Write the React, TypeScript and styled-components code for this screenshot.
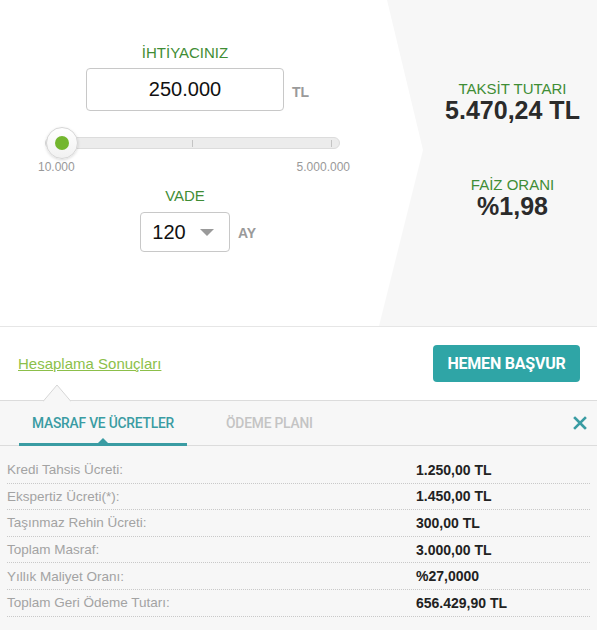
import React from 'react'
import styled, { createGlobalStyle } from 'styled-components'

const GlobalStyle = createGlobalStyle`
  html, body {
    margin: 0;
    padding: 0;
    background: #fff;
    font-family: "Liberation Sans", Arial, sans-serif;
  }
`

const green = '#3f8d35'
const teal = '#2fa5a6'

const Wrapper = styled.div`
  width: 597px;
  height: 630px;
  overflow: hidden;
  display: flex;
  flex-direction: column;
`

const Calculator = styled.div`
  height: 326px;
  display: flex;
  border-bottom: 1px solid #e6e6e6;
`

const Inputs = styled.div`
  width: 370px;
  padding-top: 44px;
  display: flex;
  flex-direction: column;
  align-items: center;
`

const FieldLabel = styled.div<{ $top?: number }>`
  font-size: 15px;
  line-height: 18px;
  color: ${green};
  margin-top: ${({ $top }) => $top || 0}px;
`

const FieldRow = styled.div<{ $top: number }>`
  width: 100%;
  display: grid;
  grid-template-columns: 1fr auto 1fr;
  align-items: center;
  margin-top: ${({ $top }) => $top}px;
`

const AmountBox = styled.div`
  width: 196px;
  height: 41px;
  border: 1px solid #c8c8c8;
  border-radius: 4px;
  display: flex;
  align-items: center;
  justify-content: center;
  font-size: 20px;
  color: #111;
`

const SelectBox = styled.div`
  width: 90px;
  height: 40px;
  border: 1px solid #c8c8c8;
  border-radius: 4px;
  display: flex;
  align-items: center;
  justify-content: center;
  gap: 14px;
  padding-right: 4px;
  box-sizing: border-box;
  font-size: 20px;
  color: #111;
`

const Caret = styled.span`
  width: 0;
  height: 0;
  border-left: 7px solid transparent;
  border-right: 7px solid transparent;
  border-top: 7px solid #9a9a9a;
`

const Unit = styled.span<{ $offset: number }>`
  font-size: 14px;
  font-weight: bold;
  color: #9a9a9a;
  margin-left: 8px;
  padding-top: ${({ $offset }) => $offset}px;
  justify-self: start;
`

const SliderBlock = styled.div`
  align-self: flex-start;
  margin-left: 38px;
  margin-top: 16px;
  width: 312px;
`

const SliderTrackArea = styled.div`
  height: 32px;
  display: flex;
  align-items: center;
  padding-left: 7px;
`

const Track = styled.div`
  position: relative;
  width: 295px;
  height: 12px;
  box-sizing: border-box;
  background: #ececec;
  border: 1px solid #dcdcdc;
  border-radius: 6px;
`

const Tick = styled.span<{ $left: number }>`
  position: absolute;
  top: 2px;
  left: ${({ $left }) => $left}px;
  width: 1px;
  height: 7px;
  background: #c4c4c4;
`

const Knob = styled.div`
  position: absolute;
  left: 0;
  top: -11px;
  width: 32px;
  height: 32px;
  box-sizing: border-box;
  border-radius: 50%;
  background: linear-gradient(#fff, #f1f1f1);
  border: 1px solid #d6d6d6;
  box-shadow: 0 1px 3px rgba(0, 0, 0, 0.15);
  display: flex;
  align-items: center;
  justify-content: center;
`

const KnobDot = styled.span`
  width: 14px;
  height: 14px;
  border-radius: 50%;
  background: #73b62e;
`

const Scale = styled.div`
  display: flex;
  justify-content: space-between;
  font-size: 12px;
  line-height: 14px;
  color: #999;
  margin-top: 1px;
`

const Result = styled.div`
  flex: 1;
  margin-left: 9px;
  background: #f7f7f7;
  clip-path: polygon(8px 0, 100% 0, 100% 100%, 0 100%, 44px 150px);
  padding: 80px 0 0 49px;
  display: flex;
  flex-direction: column;
  align-items: center;
`

const ResultLabel = styled.div<{ $top?: number }>`
  font-size: 15px;
  line-height: 17px;
  color: ${green};
  margin-top: ${({ $top }) => $top || 0}px;
`

const ResultValue = styled.div`
  font-size: 25px;
  line-height: 26px;
  font-weight: bold;
  color: #2b2b2b;
`

const ActionBar = styled.div`
  height: 73px;
  display: flex;
  align-items: center;
  justify-content: space-between;
  padding: 0 17px 0 18px;
`

const ResultsLink = styled.a`
  font-size: 15px;
  color: #8cbf4a;
  text-decoration: underline;
  cursor: pointer;
`

const ApplyButton = styled.button`
  width: 147px;
  height: 37px;
  border: none;
  border-radius: 4px;
  background: ${teal};
  color: #fff;
  font-family: Roboto, "Liberation Sans", sans-serif;
  font-weight: 700;
  font-size: 16px;
  letter-spacing: -0.2px;
  cursor: pointer;
`

const Details = styled.div`
  position: relative;
  flex: 1;
  background: #f7f7f7;
  border-top: 1px solid #dcdcdc;
`

const Notch = styled.svg`
  position: absolute;
  left: 43px;
  top: -17px;
`

const Tabs = styled.div`
  height: 44px;
  display: flex;
  align-items: stretch;
  padding: 0 10px 0 19px;
  border-bottom: 1px solid #dcdcdc;
`

const Tab = styled.div<{ $active?: boolean }>`
  position: relative;
  display: flex;
  align-items: center;
  padding: 1px 13px 0;
  margin-right: 26px;
  font-family: Roboto, "Liberation Sans", sans-serif;
  font-weight: 500;
  font-size: 13.8px;
  letter-spacing: -0.2px;
  color: ${({ $active }) => ($active ? '#3a9ca3' : '#c4c4c4')};
  border-bottom: 3px solid ${({ $active }) => ($active ? '#3a9ca3' : 'transparent')};
  margin-bottom: -1px;

  &::after {
    content: '';
    display: ${({ $active }) => ($active ? 'block' : 'none')};
    position: absolute;
    bottom: 0;
    left: 50%;
    margin-left: -5px;
    border-left: 5px solid transparent;
    border-right: 5px solid transparent;
    border-bottom: 5px solid #3a9ca3;
  }
`

const CloseButton = styled.button`
  margin-left: auto;
  background: none;
  border: none;
  padding: 0;
  display: flex;
  align-items: center;
  cursor: pointer;
`

const Rows = styled.div`
  padding: 11px 7px 0 7px;
`

const Row = styled.div`
  display: grid;
  grid-template-columns: 409px 1fr;
  align-items: center;
  height: 26.6px;
  box-sizing: border-box;
  border-bottom: 1px dotted #c9c9c9;
`

const RowLabel = styled.span`
  font-size: 13.5px;
  color: #a3a3a3;
`

const RowValue = styled.span`
  font-size: 14px;
  color: #222;
  font-weight: bold;
`

const fees = [
  ['Kredi Tahsis Ücreti:', '1.250,00 TL'],
  ['Ekspertiz Ücreti(*):', '1.450,00 TL'],
  ['Taşınmaz Rehin Ücreti:', '300,00 TL'],
  ['Toplam Masraf:', '3.000,00 TL'],
  ['Yıllık Maliyet Oranı:', '%27,0000'],
  ['Toplam Geri Ödeme Tutarı:', '656.429,90 TL'],
]

const App: React.FC = () => {
  return (
    <Wrapper>
      <GlobalStyle />
      <Calculator>
        <Inputs>
          <FieldLabel>İHTİYACINIZ</FieldLabel>
          <FieldRow $top={6}>
            <span />
            <AmountBox>250.000</AmountBox>
            <Unit $offset={4}>TL</Unit>
          </FieldRow>
          <SliderBlock>
            <SliderTrackArea>
              <Track>
                <Tick $left={146} />
                <Tick $left={285} />
                <Knob>
                  <KnobDot />
                </Knob>
              </Track>
            </SliderTrackArea>
            <Scale>
              <span>10.000</span>
              <span>5.000.000</span>
            </Scale>
          </SliderBlock>
          <FieldLabel $top={13}>VADE</FieldLabel>
          <FieldRow $top={7}>
            <span />
            <SelectBox>
              <span>120</span>
              <Caret />
            </SelectBox>
            <Unit $offset={2}>AY</Unit>
          </FieldRow>
        </Inputs>
        <Result>
          <ResultLabel>TAKSİT TUTARI</ResultLabel>
          <ResultValue>5.470,24 TL</ResultValue>
          <ResultLabel $top={53}>FAİZ ORANI</ResultLabel>
          <ResultValue>%1,98</ResultValue>
        </Result>
      </Calculator>

      <ActionBar>
        <ResultsLink>Hesaplama Sonuçları</ResultsLink>
        <ApplyButton>HEMEN BAŞVUR</ApplyButton>
      </ActionBar>

      <Details>
        <Notch width="28" height="18" viewBox="0 0 28 18">
          <polyline points="0,17.5 14,1 28,17.5" fill="#f7f7f7" stroke="#d6d6d6" strokeWidth="1" />
        </Notch>
        <Tabs>
          <Tab $active>MASRAF VE ÜCRETLER</Tab>
          <Tab>ÖDEME PLANI</Tab>
          <CloseButton>
            <svg width="14" height="14" viewBox="0 0 14 14">
              <path d="M2 2 L12 12 M12 2 L2 12" stroke="#3a9ca3" strokeWidth="2.6" strokeLinecap="square" />
            </svg>
          </CloseButton>
        </Tabs>
        <Rows>
          {fees.map(([label, value]) => (
            <Row key={label}>
              <RowLabel>{label}</RowLabel>
              <RowValue>{value}</RowValue>
            </Row>
          ))}
        </Rows>
      </Details>
    </Wrapper>
  )
}

export default App
